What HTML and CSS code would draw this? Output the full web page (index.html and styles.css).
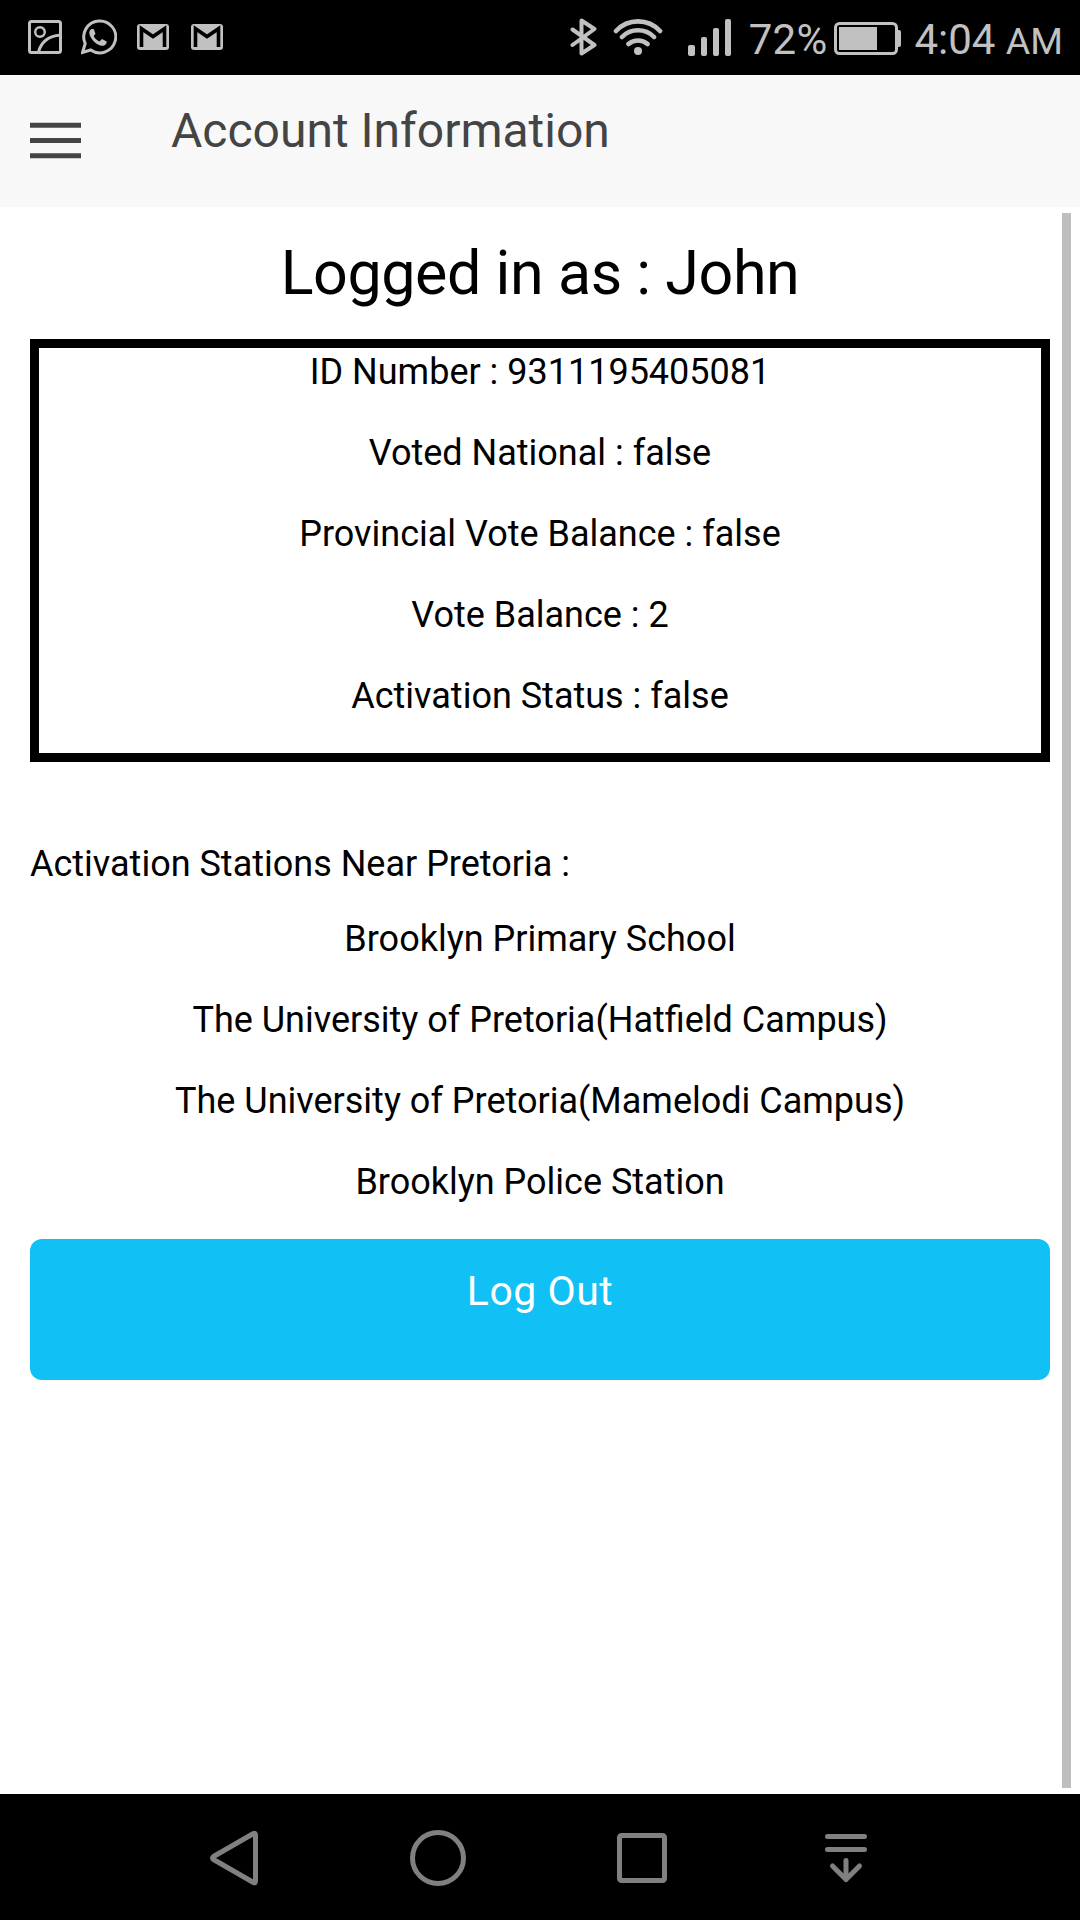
FILE: index.html
```html
<!DOCTYPE html>
<html lang="en">
<head>
<meta charset="utf-8">
<title>Account Information</title>
<link rel="stylesheet" href="styles.css">
</head>
<body>
<div class="status">
  <div class="notifications">
    <svg width="34" height="34" viewBox="0 0 34 34" fill="none" stroke="#c1c1c1" stroke-width="3"><rect x="1.5" y="1.5" width="31" height="31" rx="2"/><circle cx="12" cy="12" r="4.8" stroke-width="2.4"/><path d="M10.5 32C13 22 21 15.500 32 15.200"/></svg>
    <svg width="36" height="36" viewBox="0 0 36 36"><path d="M4.200 24.500A16 15.900 0 1 1 9.700 31L1.500 33.500Z" fill="none" stroke="#c1c1c1" stroke-width="3"/><path d="M10.500 10C8.500 11 7.800 13 8.700 16C10.500 21 15 25.500 20.500 26.800C23.500 27.300 26 25 25.700 22.600L21 20L18.500 22.500C16 21.500 13.700 19.300 12.700 17L14.500 14.700L12.700 10Z" fill="#c1c1c1"/></svg>
    <svg class="mail" width="32" height="26" viewBox="0 0 32 26"><rect width="32" height="26" rx="3" fill="#c1c1c1"/><path d="M4.500 23V4.700L16 12.500L27.500 4.700V23" fill="none" stroke="#000" stroke-width="3.600"/></svg>
    <svg class="mail" width="32" height="26" viewBox="0 0 32 26"><rect width="32" height="26" rx="3" fill="#c1c1c1"/><path d="M4.500 23V4.700L16 12.500L27.500 4.700V23" fill="none" stroke="#000" stroke-width="3.600"/></svg>
  </div>
  <div class="indicators">
    <svg width="28" height="38" viewBox="0 0 28 38" fill="none" stroke="#c1c1c1" stroke-width="4" stroke-linecap="round" stroke-linejoin="round"><path d="M2.500 11.500L24.500 27L11.500 35.500V2.500L24.500 11L2.500 27"/></svg>
    <svg class="wifi" width="50" height="38" viewBox="0 0 50 38" fill="none" stroke="#c1c1c1" stroke-width="4.600" stroke-linecap="round"><path d="M3 13A30 30 0 0 1 47 13M9 19A22.500 22.500 0 0 1 41 19M15.500 26A14.500 14.500 0 0 1 34.500 26"/><circle cx="25" cy="33" r="4" fill="#c1c1c1" stroke="none"/></svg>
    <svg class="signal" width="43" height="37" viewBox="0 0 43 37" fill="#c1c1c1"><rect y="26" width="7" height="11" rx="2"/><rect x="13" y="18" width="6" height="19" rx="2"/><rect x="25" y="9" width="6" height="28" rx="2"/><rect x="37" width="6" height="37" rx="2"/></svg>
    <span class="percent">72%</span>
    <svg class="battery" width="67" height="33" viewBox="0 0 67 33"><rect x="1.500" y="1.500" width="61" height="30" rx="4" fill="none" stroke="#c1c1c1" stroke-width="3"/><path d="M5 5H43V28H5ZM63 8H65Q67 8 67 10V23Q67 25 65 25H63Z" fill="#c1c1c1"/></svg>
    <span class="clock">4:04 <span class="meridiem">AM</span></span>
  </div>
</div>
<header class="toolbar">
  <svg class="menu" width="51" height="37" viewBox="0 0 51 37" fill="#444"><path d="M0 .8H51V5.800H0ZM0 16H51V21H0ZM0 31.200H51V36.200H0Z"/></svg>
  <h1 class="title">Account Information</h1>
</header>
<main class="content">
  <h2 class="greeting">Logged in as : John</h2>
  <section class="details">
    <p>ID Number : 9311195405081</p>
    <p>Voted National : false</p>
    <p>Provincial Vote Balance : false</p>
    <p>Vote Balance : 2</p>
    <p>Activation Status : false</p>
  </section>
  <h3 class="nearby">Activation Stations Near Pretoria :</h3>
  <section class="stations">
    <p>Brooklyn Primary School</p>
    <p>The University of Pretoria(Hatfield Campus)</p>
    <p>The University of Pretoria(Mamelodi Campus)</p>
    <p>Brooklyn Police Station</p>
  </section>
  <button class="logout">Log Out</button>
  <div class="scrollbar"></div>
</main>
<nav class="navbar">
  <svg width="58" height="58" viewBox="0 0 58 58"><path d="M48.500 4.500Q50.500 3.500 50.500 6V52Q50.500 54.500 48.500 53.500L8.500 30.500Q6.500 29 8.500 27.500Z"/></svg>
  <svg width="58" height="58" viewBox="0 0 58 58"><circle cx="29" cy="29" r="25.500"/></svg>
  <svg width="58" height="58" viewBox="0 0 58 58"><rect x="6.500" y="6.500" width="45" height="45" rx="2"/></svg>
  <svg width="58" height="58" viewBox="0 0 58 58"><path d="M10.500 7.500H47.500M10.500 20.500H47.500M29 31.500V50.500M15.500 37L29 50.500L42.500 37"/></svg>
</nav>
</body>
</html>
```
FILE: styles.css
```css
* { box-sizing: border-box; }
body {
  margin: 0;
  width: 1080px;
  height: 1920px;
  display: flex;
  flex-direction: column;
  background: #fff;
  color: #000;
  font-family: Roboto, sans-serif;
  overflow: hidden;
}
svg { display: block; flex: none; }
h1, h2, h3, p { margin: 0; font-weight: 400; }

.status {
  height: 75px;
  flex: none;
  display: flex;
  justify-content: space-between;
  background: #000;
  color: #c1c1c1;
  font-size: 42px;
  line-height: 50px;
}
.notifications { display: flex; align-items: center; height: 74px; padding-left: 28px; gap: 19px; }
.mail { margin-left: 1px; }
.mail + .mail { margin-left: 3px; }
.indicators { display: flex; align-items: flex-start; padding: 18px 17px 0 0; }
.wifi { margin-left: 15px; }
.signal { margin: 1px 0 0 25px; }
.percent { margin: -3px 0 0 18px; letter-spacing: 0.2px; }
.battery { margin: 4px 0 0 7px; }
.clock { margin: -3px 0 0 13px; white-space: nowrap; }
.meridiem { font-size: 37.5px; }

.toolbar {
  height: 132px;
  flex: none;
  display: flex;
  align-items: flex-start;
  background: #f8f8f8;
  color: #444;
  padding: 0 30px;
}
.menu { margin-top: 47px; }
.title { margin: 28px 0 0 90px; font-size: 48px; line-height: 56px; }

.content {
  position: relative;
  flex: 1;
  padding: 30px 30px 0;
  text-align: center;
  font-size: 36px;
  line-height: 49px;
}
.greeting { font-size: 61px; line-height: 72px; letter-spacing: -0.45px; margin-bottom: 30px; }
.details { border: 9px solid #000; }
.details p, .stations p { margin-bottom: 32px; }
.nearby { margin-top: 78px; font-size: 36px; text-align: left; }
.stations { margin-top: 26px; }
.logout {
  display: block;
  width: 100%;
  height: 141px;
  border: 0;
  border-radius: 12px;
  padding: 0 0 37px;
  background: #11c1f5;
  color: #fff;
  font: 41px/48px Roboto, sans-serif;
  letter-spacing: 0.5px;
}
.scrollbar {
  position: absolute;
  top: 6px;
  right: 9px;
  bottom: 6px;
  width: 9px;
  background: #bebebe;
}

.navbar {
  height: 126px;
  flex: none;
  display: flex;
  align-items: center;
  gap: 146px;
  padding: 2px 0 0 205px;
  background: #000;
}
.navbar svg {
  fill: none;
  stroke: #808080;
  stroke-width: 5;
  stroke-linecap: round;
  stroke-linejoin: round;
}
```
